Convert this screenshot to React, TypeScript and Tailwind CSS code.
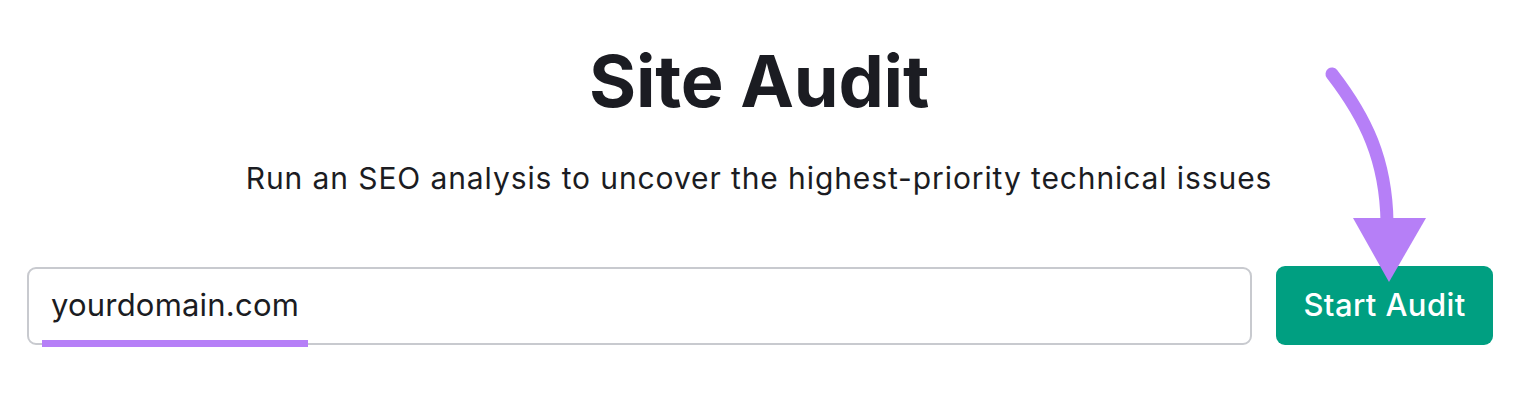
import React from 'react';

function Arrow() {
  return (
    <svg className="pointer-events-none absolute left-0 top-0" width="1518" height="405" viewBox="0 0 1518 405">
      <path d="M1332 74 C 1366 118, 1386 160, 1387 222" fill="none" stroke="#b67ff7" strokeWidth="13" strokeLinecap="round" />
      <polygon points="1353,218 1426,218 1389,282" fill="#b67ff7" />
    </svg>
  );
}

export default function App() {
  return (
    <div className="relative h-[405px] w-full bg-white" style={{ fontFamily: 'Inter, "Noto Sans", sans-serif' }}>
      <div className="flex flex-col items-center pt-[45px]">
        <h1 className="text-[72px] font-bold leading-none tracking-[-0.2px] text-[#1b1c22]">Site Audit</h1>
        <p className="mt-[43px] text-[30px] leading-[36px] tracking-[0.9px] text-[#1b1c22]">
          Run an SEO analysis to uncover the highest-priority technical issues
        </p>
      </div>
      <div className="mt-[70px] flex items-center gap-6 pl-[27px] pr-[25px]">
        <div className="relative flex h-[78px] flex-1 items-center rounded-[9px] border-2 border-[#c8cacf] pl-[22px]">
          <span className="text-[31px] tracking-[0.2px] text-[#1b1c22]">yourdomain.com</span>
          <div className="absolute -bottom-[4px] left-[13px] h-[7px] w-[266px] bg-[#b67ff7]" />
        </div>
        <button className="h-[79px] w-[217px] rounded-[9px] bg-[#009f81] text-[31px] font-medium tracking-[0.4px] text-white">
          Start Audit
        </button>
      </div>
      <Arrow />
    </div>
  );
}
